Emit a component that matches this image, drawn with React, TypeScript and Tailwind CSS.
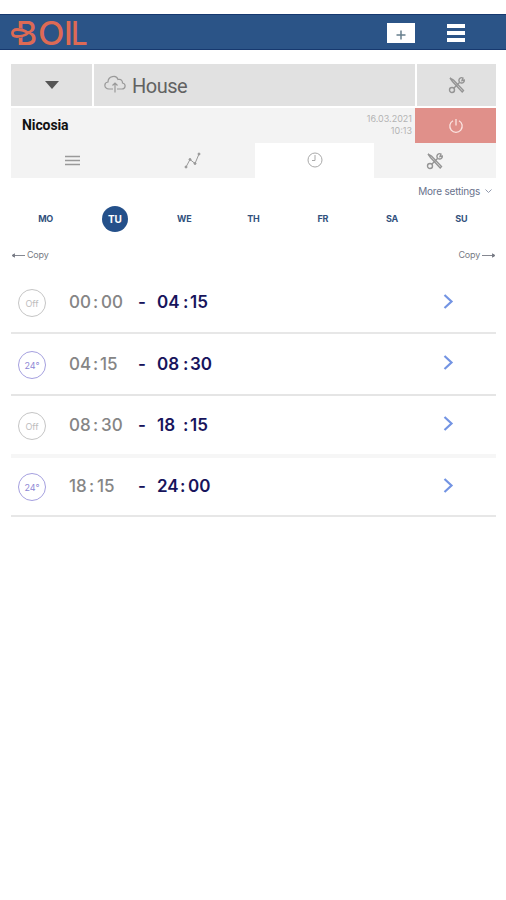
import type { ReactNode } from 'react';

const days = ['MO', 'TU', 'WE', 'TH', 'FR', 'SA', 'SU'];

interface Slot {
  mode: 'off' | 'heat';
  from: [string, string];
  to: [string, string];
  fromHour: string;
  fromColon: string;
  toHour: string;
  toColon: string;
  row: string;
}

const slots: Slot[] = [
  { mode: 'off', from: ['00', '00'], to: ['04', '15'], fromHour: 'w-[22px]', fromColon: 'w-[10px]', toHour: 'w-[24px]', toColon: 'w-[9px]', row: 'h-[61px] border-b-2 border-[#e7e7e7]' },
  { mode: 'heat', from: ['04', '15'], to: ['08', '30'], fromHour: 'w-[22px]', fromColon: 'w-[9px]', toHour: 'w-[24px]', toColon: 'w-[9px]', row: 'h-[62px] border-b-2 border-[#e5e5e5]' },
  { mode: 'off', from: ['08', '30'], to: ['18', '15'], fromHour: 'w-[22px]', fromColon: 'w-[10px]', toHour: 'w-[24px]', toColon: 'w-[9px]', row: 'h-[62px] border-b-4 border-[#f6f6f6]' },
  { mode: 'heat', from: ['18', '15'], to: ['24', '00'], fromHour: 'w-[18px]', fromColon: 'w-[10px]', toHour: 'w-[21px]', toColon: 'w-[10px]', row: 'h-[59px] border-b-2 border-[#e7e7e7]' },
];

function Logo() {
  return (
    <div className="relative ml-[11px] h-[34px] w-[80px] text-[#dd6a55]">
      <div className="flex pt-[2px] font-['Inter',sans-serif] text-[32px] font-medium leading-[34px]">
        <span className="ml-[5px] w-[22px] shrink-0">B</span>
        <span className="w-[26px] shrink-0 origin-left scale-x-[1.08]">O</span>
        <span className="w-[7px] shrink-0">I</span>
        <span className="origin-left scale-x-[0.92]">L</span>
      </div>
      <svg className="absolute left-0 top-[13px]" width="19" height="10" viewBox="0 0 19 10">
        {/* clears the middle of the stem so the loop reads as one line */}
        <path d="M5 0H10.500V10H5Z" fill="#2b5487" />
        <path d="M17 5C14 2.500 10 1.500 6 1.500C3 1.500 1.500 3 1.500 5S3 8.500 6 8.500C10 8.500 14 7.500 17 5Z" fill="#2b5487" stroke="currentColor" strokeWidth="2.800" />
      </svg>
    </div>
  );
}

function Tools() {
  return (
    <svg width="18" height="18" viewBox="0 0 18 18" fill="none" stroke="#949494" strokeWidth="1.400">
      <path d="M2 2L5.500 4L15.500 14.500L14.200 16L4.500 5.500ZM11.500 6.500L6 12" />
      <path d="M15 2A2.700 2.700 0 1 0 16.300 4L14 4.500Z" />
      <circle cx="4" cy="14" r="2.500" />
    </svg>
  );
}

function Tab({ active, children }: { active?: boolean; children: ReactNode }) {
  return (
    <div className={`flex items-center justify-center ${active ? 'bg-white' : 'bg-[#f3f3f3]'}`}>
      {children}
    </div>
  );
}

function Time({ value, hour, colon }: { value: [string, string]; hour: string; colon: string }) {
  return (
    <>
      <span className={`shrink-0 ${hour}`}>{value[0]}</span>
      <span className={`shrink-0 pl-[2px] ${colon}`}>:</span>
      <span>{value[1]}</span>
    </>
  );
}

function SlotRow({ slot }: { slot: Slot }) {
  const off = slot.mode === 'off';
  return (
    <div className={`flex items-center ${slot.row}`}>
      <div
        className={`ml-[7px] mt-px flex size-7 items-center justify-center rounded-full border pt-[2px] text-[9px] ${
          off ? 'border-[#c5c5c5] text-[#bdbdbd]' : 'border-[#a5a0df] text-[#8e88d5]'
        }`}
      >
        {off ? 'Off' : '24°'}
      </div>
      <div className="ml-[23px] flex w-[69px] pt-px text-[17px] font-medium text-[#858585]">
        <Time value={slot.from} hour={slot.fromHour} colon={slot.fromColon} />
      </div>
      <div className="w-[19px] pt-px text-[17px] font-semibold text-[#17145c]">-</div>
      <div className="flex w-[286px] pt-px text-[17px] font-semibold text-[#17145c]">
        <Time value={slot.to} hour={slot.toHour} colon={slot.toColon} />
      </div>
      <svg className="-mt-[3px]" width="11" height="15" viewBox="0 0 11 15" fill="none" stroke="#7394e3" strokeWidth="2.200">
        <path d="M1.500 1L8.500 7.500L1.500 14" />
      </svg>
    </div>
  );
}

export default function App() {
  return (
    <div className="h-[900px] w-[506px] overflow-hidden bg-white pt-[14px] font-['Inter',sans-serif]">
      <header className="flex h-9 items-center border-y border-[#17396f] bg-[#2b5487]">
        <Logo />
        <div className="ml-[296px] mt-px flex h-5 w-7 items-center justify-center bg-white pt-[4px] text-[#677f8d]">
          <svg width="10" height="10" viewBox="0 0 10 10" stroke="currentColor" strokeWidth="1.500">
            <path d="M5 0.500V9.500M0.500 5H9.500" />
          </svg>
        </div>
        <div className="ml-8 mt-[2px] flex flex-col gap-[3px]">
          <div className="h-[4px] w-[18px] bg-white" />
          <div className="h-[4px] w-[18px] bg-white" />
          <div className="h-[4px] w-[18px] bg-white" />
        </div>
      </header>

      <main className="ml-[11px] mt-[14px] w-[485px]">
        <div className="grid h-[42px] grid-cols-[81px_321px_79px] gap-[2px]">
          <div className="flex items-center justify-center bg-[#e1e1e1]">
            <svg width="14" height="8" viewBox="0 0 14 8" fill="#555">
              <path d="M0 0H14L7 8Z" />
            </svg>
          </div>
          <div className="flex items-center bg-[#e1e1e1] pl-[10px]">
            <svg className="-mt-[2px]" width="22" height="18" viewBox="0 0 22 18" fill="none" stroke="#999" strokeWidth="1.200">
              <path d="M9 14H5C-0.500 13.500-0.200 7.500 4 7C4 1 12.500-0.500 14 4.500C18 3.500 18.500 7 18.500 8C22.500 9 21.500 14 18 14H13M11 17.500V8.500M8.500 10.500L11 8L13.500 10.500" />
            </svg>
            <span className="ml-[6px] pt-px font-['Roboto',sans-serif] text-[20px] tracking-[-0.5px] text-[#626262]">House</span>
          </div>
          <div className="flex items-center justify-center bg-[#e1e1e1]">
            <Tools />
          </div>
        </div>

        <div className="mt-[2px] flex h-[35px] bg-[#f3f3f3]">
          <div className="flex-1 pl-[11px] font-['Roboto',sans-serif] text-[14px] font-bold leading-[35px] tracking-[-0.1px] text-[#111]">Nicosia</div>
          <div className="pr-[3px] pt-[5px] text-right text-[9px] leading-[12px] text-[#b3b3b3]">
            <div>16.03.2021</div>
            <div>10:13</div>
          </div>
          <div className="flex w-[81px] items-center justify-center bg-[#e0908a]">
            <svg width="16" height="16" viewBox="0 0 16 16" fill="none" stroke="#fbe4e1" strokeWidth="1.300">
              <path d="M5 2.700A6.200 6.200 0 1 0 11 2.700M8 1V7.500" />
            </svg>
          </div>
        </div>

        <div className="grid h-[35px] grid-cols-[122px_122px_119px_122px]">
          <Tab>
            <svg width="15" height="11" viewBox="0 0 15 11" stroke="#999" strokeWidth="1.300">
              <path d="M0 1.500H15M0 5.500H15M0 9.500H15" />
            </svg>
          </Tab>
          <Tab>
            <svg className="-ml-[3px]" width="17" height="17" viewBox="0 0 17 17" fill="#999" stroke="#999">
              <path d="M2 15L6 7.500L11 11.500L15 2" fill="none" />
              <circle cx="2" cy="15" r="1" />
              <circle cx="6" cy="7.500" r="1" />
              <circle cx="11" cy="11.500" r="1" />
              <circle cx="15" cy="2" r="1" />
            </svg>
          </Tab>
          <Tab active>
            <svg className="-mt-[2px]" width="16" height="16" viewBox="0 0 16 16" fill="none" stroke="#aaa">
              <circle cx="8" cy="8" r="7" />
              <path d="M8 3V8.500H5" />
            </svg>
          </Tab>
          <Tab>
            <Tools />
          </Tab>
        </div>

        <div className="mt-[5px] flex h-4 items-center justify-end pr-[4px] text-[10px] tracking-[-0.2px] text-[#69728c]">
          More settings
          <svg className="ml-[5px]" width="7" height="5" viewBox="0 0 7 5" fill="none" stroke="#929aae">
            <path d="M0.500 0.500L3.500 3.500L6.500 0.500" />
          </svg>
        </div>

        <div className="mt-[6px] grid h-[28px] grid-cols-7 items-center justify-items-center text-[9px] font-bold tracking-[-0.2px] text-[#32517d]">
          {days.map((day) => (
            <div
              key={day}
              className={
                day === 'TU'
                  ? 'flex size-[26px] items-center justify-center rounded-full bg-[#24508a] text-[10px] text-white'
                  : ''
              }
            >
              {day}
            </div>
          ))}
        </div>

        <div className="mt-[14px] flex h-4 items-center justify-between text-[9px] tracking-[-0.2px] text-[#777b84]">
          <div className="flex items-center gap-[2px]">
            <svg width="14" height="5" viewBox="0 0 14 5" fill="currentColor" stroke="currentColor">
              <path d="M1 2.500L3.500 0.800V4.200ZM3 2.500H14" strokeWidth="0.900" />
            </svg>
            Copy
          </div>
          <div className="flex items-center gap-[2px]">
            Copy
            <svg width="14" height="5" viewBox="0 0 14 5" fill="currentColor" stroke="currentColor">
              <path d="M13 2.500L10.500 0.800V4.200ZM11 2.500H0" strokeWidth="0.900" />
            </svg>
          </div>
        </div>

        <div className="mt-[10px]">
          {slots.map((slot) => (
            <SlotRow key={slot.from.join()} slot={slot} />
          ))}
        </div>
      </main>
    </div>
  );
}
